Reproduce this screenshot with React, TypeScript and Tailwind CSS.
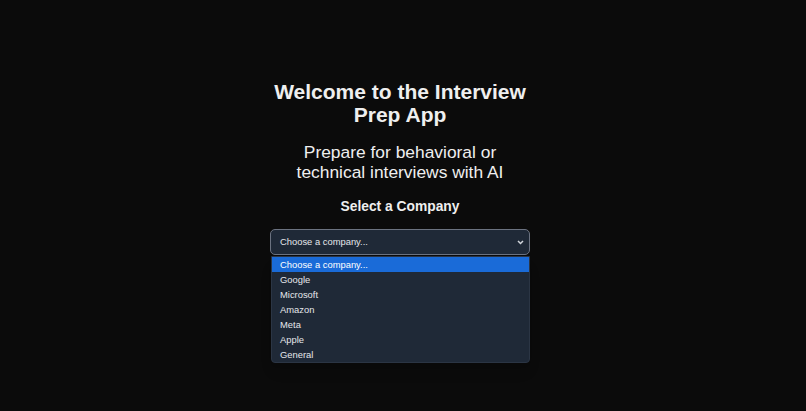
const companies = ["Google", "Microsoft", "Amazon", "Meta", "Apple", "General"];

export default function App() {
  return (
    <div
      className="min-h-screen bg-[#0b0b0b] text-[#efefef] flex flex-col items-center pt-[80px] pr-[6px]"
      style={{ fontFamily: '"Liberation Sans", Arial, sans-serif' }}
    >
      <div className="w-[260px] flex flex-col items-center text-center">
        {/* Title */}
        <h1 className="text-[21px] leading-[23px] font-bold">
          Welcome to the Interview Prep App
        </h1>
        <p className="mt-[16px] text-[17.4px] leading-[20px]">
          Prepare for behavioral or technical interviews with AI
        </p>
        <h2 className="mt-[16px] text-[13.8px] leading-[17px] font-bold">
          Select a Company
        </h2>

        {/* Select with open list */}
        <div className="relative mt-[14px] w-[260px]">
          <div className="h-[26px] w-full rounded-[5px] border border-[#6b7280] bg-[#1f2937] flex items-center justify-between pl-[9px] pr-[5px] text-[9.4px] text-[#e5e7eb]">
            <span>Choose a company...</span>
            <svg width="7" height="5" viewBox="0 0 7 5" className="text-[#d1d5db]">
              <path d="M1 1 L3.5 3.5 L6 1" stroke="currentColor" strokeWidth="1.5" fill="none" />
            </svg>
          </div>
          <div className="absolute left-px right-0 top-[27px] rounded-b-[4px] border border-[#2b3544] bg-[#1f2937] overflow-hidden text-left text-[9.4px] text-[#e5e7eb] shadow-lg">
            <div className="h-[15px] leading-[15px] pl-[8px] bg-[#1a6bd8] text-white">
              Choose a company...
            </div>
            {companies.map((c) => (
              <div key={c} className="h-[15px] leading-[15px] pl-[8px]">
                {c}
              </div>
            ))}
          </div>
        </div>
      </div>
    </div>
  );
}
